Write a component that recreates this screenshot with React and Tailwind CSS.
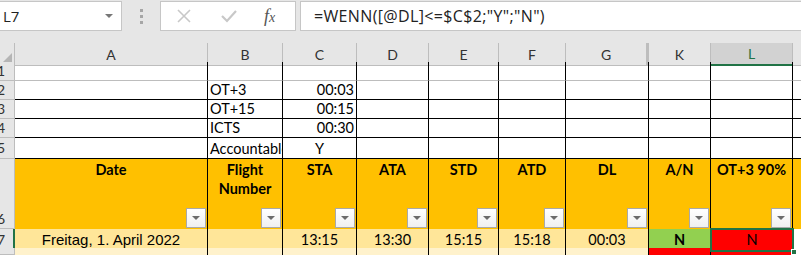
const cols = ['A', 'B', 'C', 'D', 'E', 'F', 'G', 'K', 'L'];
const grid = 'grid grid-cols-[15px_193px_75px_74px_72px_70px_67px_83px_62px_82px_8px]';
const cell = 'border-r border-b border-black overflow-hidden whitespace-nowrap';

function Filter() {
  return (
    <div className="absolute right-[1px] bottom-[1px] w-[20px] h-[20px] border border-[#a9a9a9] bg-gradient-to-b from-white to-[#f0f0f0] flex items-center justify-center">
      <div className="w-0 h-0 border-l-[4px] border-r-[4px] border-t-[4px] border-l-transparent border-r-transparent border-t-[#6b6b6b]" />
    </div>
  );
}

function RowHead({ n, active, bottom }) {
  return (
    <div
      className={`h-full relative overflow-hidden bg-[#e6e6e6] border-b border-[#bdbdbd] text-[14px] text-[#333] ${active ? 'border-r-2 border-r-[#217346]' : 'border-r border-r-[#bdbdbd]'} flex ${bottom ? 'items-end' : 'items-center'}`}
    >
      {n && <span className="absolute left-[-3px] leading-[18px]">{n}</span>}
    </div>
  );
}

const top = [
  ['', ''],
  ['OT+3', '00:03'],
  ['OT+15', '00:15'],
  ['ICTS', '00:30'],
  ['Accountable', 'Y'],
];

const heads = ['Date', 'Flight Number', 'STA', 'ATA', 'STD', 'ATD', 'DL', 'A/N', 'OT+3 90%'];

export default function App() {
  return (
    <div className="w-[801px] h-[255px] overflow-hidden bg-[#e6e6e6] font-['Lato',_'Liberation_Sans',_sans-serif] text-[14.5px] text-black">
      {/* formula bar */}
      <div className="h-[43px] pt-[1px] flex items-start">
        <div className="w-[122px] h-[30px] bg-white border border-[#c6c6c6] border-l-0 flex items-center justify-between pl-[3px] pr-[8px] font-['Open_Sans',_sans-serif] text-[15px] text-[#222]">
          <span>L7</span>
          <div className="w-0 h-0 border-l-[4px] border-r-[4px] border-t-[4px] border-l-transparent border-r-transparent border-t-[#777]" />
        </div>
        <div className="w-[38px] h-[30px] flex flex-col items-center justify-center gap-[3px]">
          <div className="w-[3px] h-[3px] bg-[#a6a6a6]" />
          <div className="w-[3px] h-[3px] bg-[#a6a6a6]" />
          <div className="w-[3px] h-[3px] bg-[#a6a6a6]" />
        </div>
        <div className="w-[136px] h-[30px] bg-white border border-[#c6c6c6] flex items-center">
          <svg className="ml-[15px]" width="16" height="16" viewBox="0 0 16 16" fill="none" stroke="#c8c8c8" strokeWidth="1.6">
            <path d="M2 2l12 12M14 2L2 14" />
          </svg>
          <svg className="ml-[28px]" width="18" height="16" viewBox="0 0 18 16" fill="none" stroke="#c8c8c8" strokeWidth="2.2">
            <path d="M2 8l5 5L16 3" />
          </svg>
          <span className="ml-[26px] font-['Liberation_Serif',_serif] italic text-[18px] text-[#555] leading-none">
            f<span className="text-[14px]">x</span>
          </span>
        </div>
        <div className="ml-[4px] flex-1 h-[30px] bg-white border border-[#c6c6c6] border-r-0 flex items-center pl-[13px] font-['Open_Sans',_sans-serif] text-[16px] tracking-[0.35px] text-[#222]">
          =WENN([@DL]&lt;=$C$2;"Y";"N")
        </div>
      </div>

      {/* column headers */}
      <div className={`${grid} h-[19px]`}>
        <div className="relative border-r border-b border-[#bdbdbd] bg-[#e6e6e6]">
          <svg className="absolute right-[2px] bottom-[2px]" width="10" height="10" viewBox="0 0 10 10">
            <path d="M10 0V10H0Z" fill="#b5b5b5" />
          </svg>
        </div>
        {cols.map((c) => (
          <div
            key={c}
            className={`flex items-center justify-center text-[14px] border-r ${c === 'G' ? 'border-r-[3px] border-r-[#bdbdbd]' : 'border-[#bdbdbd]'} ${c === 'L' ? 'bg-[#d2d2d2] border-b-2 border-b-[#217346] text-[#217346]' : 'bg-[#e6e6e6] border-b border-b-[#bdbdbd] text-[#333]'}`}
          >
            {c}
          </div>
        ))}
        <div className="bg-[#e6e6e6] border-b border-[#bdbdbd]" />
      </div>

      {/* rows 1-5 */}
      {top.map((r, i) => (
        <div key={i} className={`${grid} bg-white ${i === 4 ? 'h-[21px]' : 'h-[19px]'}`}>
          <RowHead n={i + 1} />
          {cols.map((c, j) => (
            <div
              key={c}
              className={`${cell} ${i === 0 ? 'border-b-[#bdbdbd]' : ''} flex items-end pb-[1px] leading-[17px] px-[2px] ${j === 2 ? (i === 4 ? 'justify-center' : 'justify-end') : ''}`}
            >
              {j === 1 ? r[0] : j === 2 ? r[1] : ''}
            </div>
          ))}
          <div className={`border-b ${i === 0 ? 'border-[#bdbdbd]' : 'border-black'}`} />
        </div>
      ))}

      {/* row 6 headers */}
      <div className={`${grid} h-[70px]`}>
        <RowHead n={6} bottom />
        {heads.map((h, j) => (
          <div key={h} className="relative bg-[#ffc000] border-r border-black font-bold text-center leading-[19px] pt-[1px] px-[2px]">
            <div className={j === 1 ? 'whitespace-normal' : 'whitespace-nowrap'}>
              {j === 1 ? (
                <>
                  Flight
                  <br />
                  Number
                </>
              ) : (
                h
              )}
            </div>
            <Filter />
          </div>
        ))}
        <div className="bg-[#ffc000]" />
      </div>

      {/* row 7 data */}
      <div className={`${grid} h-[19px]`}>
        <RowHead n={7} active />
        <div className={`${cell} bg-[#ffe699] flex items-center justify-center font-['Liberation_Sans',_sans-serif] text-[15px]`}>
          Freitag, 1. April 2022
        </div>
        <div className={`${cell} bg-[#ffe699]`} />
        {['13:15', '13:30', '15:15', '15:18', '00:03'].map((t, k) => (
          <div key={k} className={`${cell} bg-[#ffe699] flex items-center justify-center`}>
            {t}
          </div>
        ))}
        <div className={`${cell} bg-[#92d050] flex items-center justify-center font-bold`}>N</div>
        <div className="relative border-b border-black bg-[#ff0000] flex items-center justify-center">
          N
          <div className="absolute inset-[-1px] border-2 border-[#217346] pointer-events-none" />
          <div className="absolute right-[-4px] bottom-[-4px] w-[6px] h-[6px] bg-[#217346] border border-white" />
        </div>
        <div className="border-b border-black bg-white" />
      </div>

      {/* row 8 */}
      <div className={`${grid} h-[7px]`}>
        <RowHead />
        {cols.map((c, j) => (
          <div
            key={c}
            className={`border-r border-black ${j >= 7 ? 'bg-[#ff0000]' : 'bg-[#fff2cc]'}`}
          />
        ))}
        <div className="bg-white" />
      </div>
    </div>
  );
}
